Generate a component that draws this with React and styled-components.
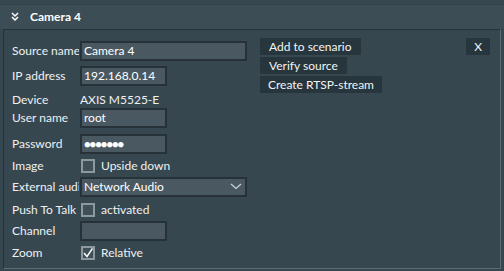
import React from "react";
import styled, { createGlobalStyle } from "styled-components";

const Global = createGlobalStyle`
  html, body {
    margin: 0;
    padding: 0;
    background: #37474f;
  }
  body {
    font-family: Lato, "Liberation Sans", sans-serif;
    font-size: 12px;
    color: #eef1f2;
  }
`;

const Page = styled.div`
  width: 504px;
  height: 271px;
  background: #37474f;
  padding-top: 4px;
  box-sizing: border-box;
  display: flex;
  flex-direction: column;
`;

const Header = styled.div`
  height: 24px;
  background: #3d4d56;
  border-top: 1px solid #34434b;
  display: flex;
  align-items: center;
  padding-left: 11px;
  gap: 11px;
  font-weight: bold;
  color: #ffffff;
  font-size: 12px;
`;

const Panel = styled.div`
  margin: 0 3px 2px 3px;
  height: 241px;
  box-sizing: border-box;
  border-left: 1px solid #263238;
  border-top: 1px solid #263238;
  border-right: 1px solid #5d6c74;
  border-bottom: 1px solid #5d6c74;
  padding: 8px 10px 0 8px;
  display: flex;
  justify-content: space-between;
`;

const Form = styled.div`
  display: flex;
  flex-direction: column;
  margin-top: 3px;
`;

const Row = styled.div`
  display: flex;
  align-items: flex-start;
  height: ${(p) => p.$h}px;
`;

const Label = styled.div`
  width: 67px;
  margin-right: 1px;
  white-space: nowrap;
  overflow: hidden;
  line-height: ${(p) => p.$lh || 19}px;
`;

const Field = styled.div`
  box-sizing: border-box;
  width: ${(p) => p.$w}px;
  height: 20px;
  background: #4a5961;
  border: 2px solid #263238;
  padding-left: 2px;
  line-height: 16px;
  color: #ffffff;
  display: flex;
  align-items: center;
  justify-content: space-between;
  white-space: nowrap;
  font-size: ${(p) => (p.$dots ? "11px" : "12px")};
  letter-spacing: ${(p) => (p.$dots ? "-1px" : "0")};
`;

const Value = styled.div`
  line-height: 17px;
`;

const Check = styled.div`
  display: flex;
  align-items: center;
  gap: 6px;
  margin-left: 1px;
  line-height: 14px;
`;

const Box = styled.div`
  width: 14px;
  height: 14px;
  box-sizing: border-box;
  border: 2px solid #8c999f;
  background: #3f4f57;
  display: flex;
  align-items: center;
  justify-content: center;
`;

const Buttons = styled.div`
  display: flex;
  flex-direction: column;
  align-items: flex-start;
  gap: 2px;
  margin-left: 13px;
  flex: 1;
`;

const TopLine = styled.div`
  display: flex;
  justify-content: space-between;
  width: 100%;
`;

const Button = styled.div`
  height: 17px;
  line-height: 17px;
  background: #27353c;
  color: #f2f4f5;
  white-space: nowrap;
  padding: 0 ${(p) => p.$px || 9}px;
`;

const Chevrons = () => (
  <svg width="8" height="9" viewBox="0 0 8 9">
    <path d="M1 1 L4 4 L7 1 M1 5 L4 8 L7 5" fill="none" stroke="#ffffff" strokeWidth="1.5" />
  </svg>
);

const Down = () => (
  <svg width="12" height="7" viewBox="0 0 12 7" style={{ marginRight: 3 }}>
    <path d="M1 1 L6 5.5 L11 1" fill="none" stroke="#c9d1d4" strokeWidth="1.3" />
  </svg>
);

const Tick = () => (
  <svg width="10" height="10" viewBox="0 0 10 10">
    <path d="M1 5 L4 8.5 L9.5 0.5" fill="none" stroke="#ffffff" strokeWidth="1.5" />
  </svg>
);

export default function App() {
  return (
    <Page>
      <Global />
      <Header>
        <Chevrons />
        <span>Camera 4</span>
      </Header>
      <Panel>
        <Form>
          <Row $h={25}>
            <Label>Source name</Label>
            <Field $w={167}>Camera 4</Field>
          </Row>
          <Row $h={25}>
            <Label>IP address</Label>
            <Field $w={87}>192.168.0.14</Field>
          </Row>
          <Row $h={17}>
            <Label $lh={17}>Device</Label>
            <Value>AXIS M5525-E</Value>
          </Row>
          <Row $h={26}>
            <Label>User name</Label>
            <Field $w={87}>root</Field>
          </Row>
          <Row $h={25}>
            <Label>Password</Label>
            <Field $w={87} $dots>●●●●●●●</Field>
          </Row>
          <Row $h={18}>
            <Label $lh={14}>Image</Label>
            <Check>
              <Box />
              Upside down
            </Check>
          </Row>
          <Row $h={26}>
            <Label>External audio</Label>
            <Field $w={167}>
              Network Audio
              <Down />
            </Field>
          </Row>
          <Row $h={18}>
            <Label $lh={14}>Push To Talk</Label>
            <Check>
              <Box />
              activated
            </Check>
          </Row>
          <Row $h={25}>
            <Label>Channel</Label>
            <Field $w={87} />
          </Row>
          <Row $h={18}>
            <Label $lh={14}>Zoom</Label>
            <Check>
              <Box>
                <Tick />
              </Box>
              Relative
            </Check>
          </Row>
        </Form>
        <Buttons>
          <TopLine>
            <Button>Add to scenario</Button>
            <Button $px={8}>X</Button>
          </TopLine>
          <Button>Verify source</Button>
          <Button $px={8}>Create RTSP-stream</Button>
        </Buttons>
      </Panel>
    </Page>
  );
}
